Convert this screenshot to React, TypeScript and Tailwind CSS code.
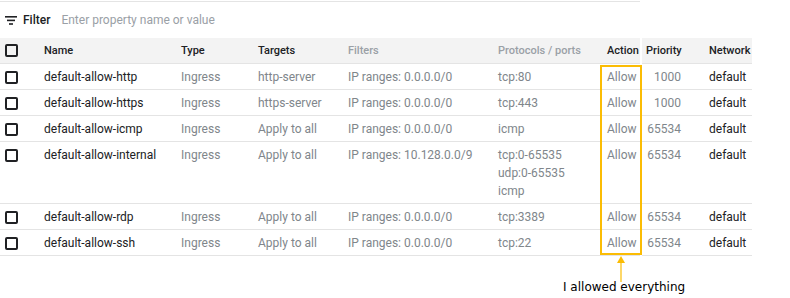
import React from "react";

type Rule = {
    name: string;
    target: string;
    range: string;
    ports: string[];
    priority: string;
};

const rules: Rule[] = [
    { name: "default-allow-http", target: "http-server", range: "IP ranges: 0.0.0.0/0", ports: ["tcp:80"], priority: "1000" },
    { name: "default-allow-https", target: "https-server", range: "IP ranges: 0.0.0.0/0", ports: ["tcp:443"], priority: "1000" },
    { name: "default-allow-icmp", target: "Apply to all", range: "IP ranges: 0.0.0.0/0", ports: ["icmp"], priority: "65534" },
    { name: "default-allow-internal", target: "Apply to all", range: "IP ranges: 10.128.0.0/9", ports: ["tcp:0-65535", "udp:0-65535", "icmp"], priority: "65534" },
    { name: "default-allow-rdp", target: "Apply to all", range: "IP ranges: 0.0.0.0/0", ports: ["tcp:3389"], priority: "65534" },
    { name: "default-allow-ssh", target: "Apply to all", range: "IP ranges: 0.0.0.0/0", ports: ["tcp:22"], priority: "65534" },
];

const cols = "grid grid-cols-[44px_137px_77px_90px_150px_109px_33px]";

function Checkbox() {
    return <span className="mt-[3px] ml-[5px] block h-[13px] w-[13px] rounded-[2px] border-2 border-[#202124]" />;
}

export default function App() {
    return (
        <div className="relative h-[298px] w-[790px] overflow-hidden bg-white text-[12px] leading-[18px] font-['Roboto',sans-serif]">
            <div className="flex">
                {/* Left: the console table */}
                <div className="w-[640px]">
                    <div className="mt-px flex h-[37px] items-center border-t border-[#e4e4e4] pl-[5px]">
                        <svg width="12" height="9" viewBox="0 0 12 9" className="mt-[1px]">
                            <rect x="0" y="0" width="12" height="1.6" fill="#202124" />
                            <rect x="2" y="3.6" width="8" height="1.6" fill="#202124" />
                            <rect x="4" y="7.2" width="4" height="1.6" fill="#202124" />
                        </svg>
                        <span className="ml-[6px] font-medium text-[#202124]">Filter</span>
                        <span className="ml-[11px] text-[#9aa0a6]">Enter property name or value</span>
                    </div>

                    <div className={`${cols} h-[26px] items-center border-b border-[#e4e4e4] bg-[#f3f3f3] text-[11px] font-medium`}>
                        <span className="ml-[5px] block h-[13px] w-[13px] rounded-[2px] border-2 border-[#202124]" />
                        <span className="text-[#202124]">Name</span>
                        <span className="text-[#202124]">Type</span>
                        <span className="text-[#202124]">Targets</span>
                        <span className="text-[#9aa0a6]">Filters</span>
                        <span className="text-[#9aa0a6]">Protocols / ports</span>
                        <span className="text-[#202124]">Action</span>
                    </div>

                    {rules.map((r) => (
                        <div key={r.name} className={`${cols} border-b border-[#e4e4e4] pt-[4px] pb-[3px]`}>
                            <Checkbox />
                            <span className="text-[#202124]">{r.name}</span>
                            <span className="text-[#80868b]">Ingress</span>
                            <span className="text-[#80868b]">{r.target}</span>
                            <span className="text-[#80868b]">{r.range}</span>
                            <div className="flex flex-col text-[#80868b]">
                                {r.ports.map((p) => (
                                    <span key={p}>{p}</span>
                                ))}
                            </div>
                            <span className="text-[#80868b]">Allow</span>
                        </div>
                    ))}
                </div>

                {/* Right: priority / network pasted beside it */}
                <div className="mt-[38px] ml-[2px] w-[110px]">
                    <div className="grid h-[26px] grid-cols-[67px_43px] items-center border-b border-[#e4e4e4] bg-[#f3f3f3] text-[11px] font-medium text-[#202124]">
                        <span className="pl-[4px]">Priority</span>
                        <span>Network</span>
                    </div>
                    {rules.map((r) => (
                        <div key={r.name} className="grid grid-cols-[67px_43px] border-b border-[#e4e4e4] pt-[4px] pb-[3px]">
                            <span className="pr-[28px] text-right text-[#80868b]">{r.priority}</span>
                            <span className="text-[#202124]">default</span>
                            {r.ports.length > 1 && <span className="col-span-2 h-[36px]" />}
                        </div>
                    ))}
                </div>
            </div>

            {/* Annotation overlay */}
            <div className="absolute top-[65px] left-[600px] h-[190px] w-[42px] border-2 border-[#fbbc04]" />
            <svg className="absolute top-[256px] left-[616px]" width="10" height="26" viewBox="0 0 10 26">
                <path d="M5 0 L9 7 L1 7 Z" fill="#fbbc04" />
                <line x1="5" y1="6" x2="5" y2="26" stroke="#fbbc04" strokeWidth="1.2" />
            </svg>
            <div className="absolute top-[279px] left-[563px] text-[12px] leading-[16px] text-black font-['DejaVu_Sans',sans-serif]">
                I allowed everything
            </div>
        </div>
    );
}
